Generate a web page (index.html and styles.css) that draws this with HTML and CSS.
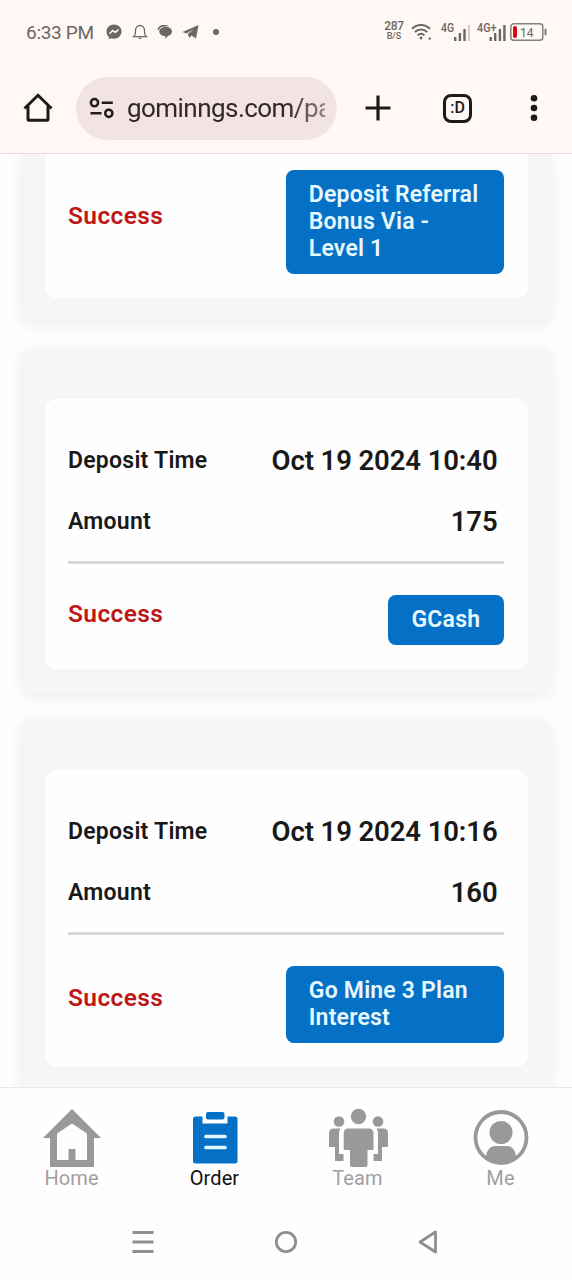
FILE: index.html
```html
<!DOCTYPE html>
<html lang="en">
<head>
<meta charset="utf-8">
<title>Orders</title>
<link rel="stylesheet" href="styles.css">
</head>
<body>
<header class="browser">
  <div class="status">
    <div class="status-left">
      <span class="clock">6:33 PM</span>
      <svg class="s-msg" width="16" height="16" viewBox="0 0 16 16"><path fill="#6b6764" d="M8 .5C3.700.5.500 3.600.500 7.700c0 2.200.9 4 2.400 5.300v2.300l2.100-1.100c1 .3 2 .5 3 .5 4.300 0 7.500-3.100 7.500-7.200S12.300.5 8 .5z"/><path d="M3.500 9.700 6.600 6.500 9.200 8.400 12.500 5.700" fill="none" stroke="#fff8f6" stroke-width="1.500"/></svg>
      <svg class="s-bell" width="16" height="16" viewBox="0 0 16 16" fill="none" stroke="#6b6764" stroke-width="1.300"><path d="M1.500 12.700c1.500-1 2-2 2-6.200C3.500 3.500 5.500 1.500 8 1.500s4.500 2 4.500 5c0 4.200.5 5.200 2 6.200z"/><path d="M6.600 14.300h2.800"/></svg>
      <svg class="s-chat" width="16" height="16" viewBox="0 0 16 16"><path fill="#6b6764" d="M.7 6C.7 2.800 3.500 1 7 1c2.500 0 4 .5 5 1.300L8 2.500C4.500 2.700 2.300 3.800 1.800 6.500z"/><path fill="#6b6764" d="M8.800 3c3.700 0 6.200 1.900 6.200 4.600 0 2.300-1.700 3.900-4.200 4.500L8.500 15v-2.700C4.800 12 2.300 10.200 2.300 7.600 2.300 4.900 5.100 3 8.800 3z"/></svg>
      <svg class="s-tg" width="17" height="16" viewBox="0 0 17 16"><path fill="#6b6764" d="M.5 8 16.500 1 14 14.500 9.500 11.500 7.200 14 5.800 10 11.800 5 4.500 9.400z"/></svg>
      <span class="dot"></span>
    </div>
    <div class="status-right">
      <div class="speed"><b>287</b><span>B/S</span></div>
      <svg class="wifi" width="22" height="18" viewBox="0 0 22 18" fill="none" stroke="#6b6764" stroke-width="2"><path d="M1 5.800C6.500.8 13.500.8 19 5.800M3.800 9.100c3.700-3.400 8.700-3.400 12.400 0M6.600 12.300c2-1.900 4.800-1.900 6.800 0"/><circle cx="10" cy="15" r="1.400" fill="#6b6764" stroke="none"/><circle cx="18.700" cy="15.600" r="1.200" fill="#6b6764" stroke="none"/></svg>
      <svg class="sig" width="31" height="20" viewBox="0 0 31 20"><text x="0" y="10" class="net" textLength="13" lengthAdjust="spacingAndGlyphs">4G</text><g fill="#6b6764"><rect x="13" y="15" width="2.400" height="4"/><rect x="17.700" y="11" width="2.400" height="8"/><rect x="22.300" y="7" width="2.400" height="12"/></g><rect x="27" y="3" width="2" height="16" fill="#d5cfcb"/></svg>
      <svg class="sig2" width="31" height="20" viewBox="0 0 31 20"><text x="0" y="10" class="net" textLength="19.500" lengthAdjust="spacingAndGlyphs">4G+</text><g fill="#6b6764"><rect x="12.500" y="15" width="2.400" height="4"/><rect x="17" y="11" width="2.400" height="8"/><rect x="21.700" y="7" width="2.400" height="12"/><rect x="26.200" y="3" width="2.400" height="16"/></g></svg>
      <svg class="batt" width="37" height="20" viewBox="0 0 37 20"><rect x=".8" y="1.800" width="32" height="16.400" rx="3" fill="none" stroke="#85807d" stroke-width="1.500"/><rect x="3" y="4" width="4" height="12" rx="1.800" fill="#d90b18"/><rect x="34.500" y="6.500" width="2" height="7" rx="1" fill="#85807d"/><text x="10" y="14.500" class="pct" textLength="13.500" lengthAdjust="spacingAndGlyphs">14</text></svg>
    </div>
  </div>
  <div class="toolbar">
    <svg width="30" height="30" viewBox="0 0 30 30" fill="none" stroke="#1f1a19" stroke-width="3" stroke-linejoin="round"><path d="M1.500 15.500 15 2.300l13.500 13.200" stroke-linejoin="miter"/><path d="M5 13v13.200q0 1 1 1h18q1 0 1-1V13"/></svg>
    <div class="url">
      <svg width="26" height="22" viewBox="0 0 26 22" fill="none" stroke="#231c1b" stroke-width="2.500"><circle cx="5.500" cy="5.700" r="3.600"/><path d="M12.800 5.700h11M1.500 16.300h11"/><circle cx="19.800" cy="16.300" r="3.600"/></svg>
      <span>gominngs.com/pa</span>
    </div>
    <svg class="plus" width="26" height="26" viewBox="0 0 26 26" stroke="#1f1a19" stroke-width="3.200"><path d="M13 .5v25M.5 13h25"/></svg>
    <div class="tabs">:D</div>
    <svg class="more" width="8" height="28" viewBox="0 0 8 28" fill="#1f1a19"><circle cx="4" cy="4.300" r="3.300"/><circle cx="4" cy="14" r="3.300"/><circle cx="4" cy="23.700" r="3.300"/></svg>
  </div>
</header>
<main>
  <section class="card first">
    <div class="panel">
      <div class="foot"><span class="state">Success</span><span class="tag">Deposit Referral Bonus Via - Level 1</span></div>
    </div>
  </section>
  <section class="card">
    <div class="panel">
      <div class="row"><span class="label">Deposit Time</span><span class="value">Oct 19 2024 10:40</span></div>
      <div class="row"><span class="label">Amount</span><span class="value">175</span></div>
      <div class="foot ruled"><span class="state">Success</span><span class="tag">GCash</span></div>
    </div>
  </section>
  <section class="card">
    <div class="panel">
      <div class="row"><span class="label">Deposit Time</span><span class="value">Oct 19 2024 10:16</span></div>
      <div class="row"><span class="label">Amount</span><span class="value">160</span></div>
      <div class="foot ruled"><span class="state">Success</span><span class="tag">Go Mine 3 Plan Interest</span></div>
    </div>
  </section>
</main>
<nav class="tabbar">
  <a class="tab"><svg width="60" height="60" viewBox="0 0 60 60"><path fill="#999" fill-rule="evenodd" d="M30 1 59 30H52V59H8V30H1zM30 15.500 15 25.500V52H26.500V41H33.500V52H45V25.500z"/></svg><span>Home</span></a>
  <a class="tab active"><svg width="60" height="60" viewBox="0 0 60 60"><rect x="8" y="8.500" width="44.500" height="47" rx="2.500" fill="#0571c6"/><path d="M17.500 8v7.500h25V8" fill="#fefefe"/><rect x="21" y="4" width="18.500" height="7.500" rx="2" fill="#0571c6"/><path d="M21 28.500h19M21 39.500h19" stroke="#e5f5ff" stroke-width="3.700" stroke-linecap="round"/></svg><span>Order</span></a>
  <a class="tab"><svg width="60" height="60" viewBox="0 0 60 60" fill="#999"><circle cx="30.500" cy="8.500" r="7.700"/><circle cx="11" cy="13.500" r="5.300"/><circle cx="50" cy="13.500" r="5.300"/><path d="M20.500 20.500h20q5 0 5 5V42h-6v15q0 2-2 2H24q-2 0-2-2V42h-6.300V25.500q0-5 4.800-5z"/><path d="M5.500 20.500H12.500q-1.500 2-1.500 5V46h4.500v7H7V39H1V25q0-4.500 4.500-4.500zM55.500 20.500H48.500q1.500 2 1.500 5V46h-4.500v7H54V39h6V25q0-4.500-4.500-4.500z"/></svg><span>Team</span></a>
  <a class="tab"><svg width="60" height="60" viewBox="0 0 60 60"><circle cx="30" cy="29.500" r="25.500" fill="none" stroke="#999" stroke-width="3.800"/><circle cx="30" cy="24.500" r="11.500" fill="#999"/><path fill="#999" d="M15 49c.5-7 4.500-11 9-11h12c4.500 0 8.500 4 9 11-8 7.500-22 7.500-30 0z"/></svg><span>Me</span></a>
</nav>
<footer class="sysnav">
  <svg width="24" height="24" viewBox="0 0 24 24" stroke="#8f8f8f" stroke-width="2.900"><path d="M1.500 2.500h21M1.500 12h21M1.500 21.500h21"/></svg>
  <svg width="24" height="24" viewBox="0 0 24 24" fill="none" stroke="#8f8f8f" stroke-width="2.800"><circle cx="12" cy="12" r="9.700"/></svg>
  <svg width="24" height="24" viewBox="0 0 24 24" fill="none" stroke="#8f8f8f" stroke-width="2.800" stroke-linejoin="round"><path d="M18.500 2v20L3 12z"/></svg>
</footer>
</body>
</html>
```
FILE: styles.css
```css
* { box-sizing: border-box; }
body { margin: 0; width: 572px; height: 1280px; display: flex; flex-direction: column; overflow: hidden; background: #fefefe; font-family: Roboto, sans-serif; color: #19191a; }
svg { display: block; flex: none; }

.browser { height: 154px; flex: none; background: #fff8f5; border-bottom: 1px solid #eadbd8; }
.status { height: 64px; padding: 0 25px 0 26px; display: flex; justify-content: space-between; align-items: center; color: #6b6764; }
.status-left, .status-right { display: flex; align-items: center; }
.clock { width: 80px; font-size: 19px; line-height: 24px; letter-spacing: -.3px; white-space: nowrap; padding-top: 1px; }
.s-bell { margin-left: 10px; }
.s-chat { margin-left: 9px; }
.s-tg { margin-left: 9px; }
.dot { width: 6px; height: 6px; margin-left: 14px; border-radius: 50%; background: #6b6764; }
.speed { width: 20px; display: flex; flex-direction: column; align-items: center; font-size: 9px; font-weight: 500; line-height: 9px; margin-right: 1px; margin-top: -2px; }
.speed b { font-size: 12px; font-weight: 500; line-height: 11px; letter-spacing: -.3px; }
.wifi { margin-left: 6px; }
.sig { margin-left: 8px; }
.sig2 { margin-left: 5px; }
.batt { margin-left: 2px; }
.net { font: 500 12px Roboto, sans-serif; fill: #6b6764; }
.pct { font: 400 13.5px Roboto, sans-serif; fill: #6b6764; }

.toolbar { height: 88px; padding: 0 34px 0 23px; display: flex; align-items: center; }
.url { width: 261px; height: 63px; margin-left: 23px; padding: 0 12px 0 13px; display: flex; align-items: center; gap: 12px; border-radius: 32px; background: #f1e4e2; overflow: hidden; }
.url span { flex: 1; overflow: hidden; white-space: nowrap; font-size: 26px; line-height: 36px; color: #332827; letter-spacing: -.55px; -webkit-mask-image: linear-gradient(90deg, #000 82%, rgba(0,0,0,.5)); mask-image: linear-gradient(90deg, #000 82%, rgba(0,0,0,.5)); }
.plus { margin-left: 28px; }
.tabs { width: 29px; height: 29px; margin-left: 52px; border: 3px solid #1f1a19; border-radius: 8px; font-size: 16px; font-weight: 500; line-height: 22px; text-align: center; color: #1f1a19; }
.more { margin-left: auto; }

main { flex: 1; min-height: 0; overflow: hidden; padding: 0 21px; display: flex; flex-direction: column; gap: 27px; }
.card { flex: none; padding: 51px 23.500px 23px; border-radius: 10px; background: #f6f6f6; box-shadow: 0 4px 16px rgba(0,0,0,.08); }
.card.first { padding-top: 0; border-radius: 0 0 10px 10px; }
.panel { padding: 31px 24px 24px 23.500px; border-radius: 12px; background: #fefefe; }
.first .panel { padding-top: 16px; border-radius: 0 0 12px 12px; }
.row { height: 61px; padding-right: 6px; display: flex; align-items: center; justify-content: space-between; }
.label { font-size: 23px; font-weight: 600; letter-spacing: .25px; }
.value { font-size: 27.500px; font-weight: 600; letter-spacing: -.1px; }
.foot { display: flex; align-items: center; justify-content: space-between; }
.foot.ruled { margin-top: 9px; padding-top: 31px; border-top: 3px solid #d7d7d7; }
.state { margin-top: -13px; font-size: 24.500px; font-weight: 600; line-height: 28px; letter-spacing: .4px; color: #bd1717; }
.tag { max-width: 218px; padding: 11px 23.300px 12px; border-radius: 8px; background: #0571c6; color: #e8f8ff; font-size: 23px; font-weight: 600; line-height: 27px; letter-spacing: .2px; }

.tabbar { height: 116px; flex: none; padding: 20px 0 0; display: flex; border-top: 1px solid #e8e8e8; background: #fefefe; }
.tab { flex: 1; display: flex; flex-direction: column; align-items: center; color: #a0a0a0; font-size: 20px; line-height: 20px; letter-spacing: .1px; }
.active { color: #111; }
.sysnav { height: 77px; flex: none; display: flex; align-items: center; justify-content: center; gap: 119px; }
```
